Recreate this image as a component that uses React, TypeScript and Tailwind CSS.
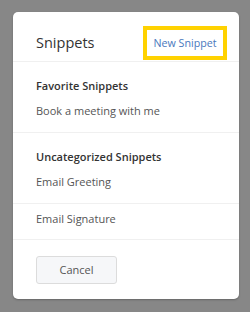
import React from "react";

export default function App() {
  const font = { fontFamily: '"Open Sans", "Noto Sans", sans-serif' };
  return (
    <div className="w-[250px] h-[312px] bg-[#878787] pt-[12px] pl-[13px]" style={font}>
      <div className="w-[226px] h-[287px] bg-white rounded-[5px] shadow-[0_1px_2px_rgba(0,0,0,0.25)] flex flex-col">
        <div className="flex items-center justify-between pl-[23px] pr-[12px] pt-[14px] pb-px border-b border-[#f0f0f0]">
          <span className="text-[14.5px] text-[#333] leading-none">Snippets</span>
          <div className="h-[34px] w-[84px] border-[4px] border-[#ffd200] flex items-center justify-center">
            <span className="text-[10.7px] text-[#4a78bd] leading-none">New Snippet</span>
          </div>
        </div>
        <div className="pl-[23px] pt-[17px] pb-[14px] border-b border-[#f0f0f0]">
          <div className="text-[11px] font-semibold text-[#333] leading-[14px]">Favorite Snippets</div>
          <div className="text-[11px] text-[#555] leading-[14px] mt-[11px]">Book a meeting with me</div>
        </div>
        <div className="pl-[23px] pt-[17px] pb-[14px] border-b border-[#f0f0f0]">
          <div className="text-[11px] font-semibold text-[#333] leading-[14px]">Uncategorized Snippets</div>
          <div className="text-[11px] text-[#555] leading-[14px] mt-[11px]">Email Greeting</div>
        </div>
        <div className="pl-[23px] pt-[8px] pb-[13px] border-b border-[#f0f0f0]">
          <div className="text-[11px] text-[#555] leading-[14px]">Email Signature</div>
        </div>
        <div className="pl-[23px] pt-[16px]">
          <button className="w-[81px] h-[28px] rounded-[3px] border border-[#dcdcdc] bg-[#f6f7f9] text-[11px] text-[#555]">Cancel</button>
        </div>
      </div>
    </div>
  );
}
